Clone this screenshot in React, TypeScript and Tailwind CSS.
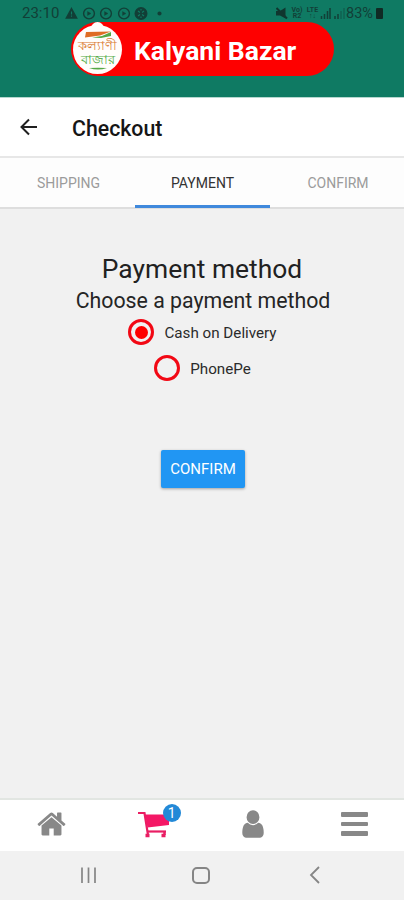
import React from "react";

const roboto = "font-['Roboto','Noto_Sans',sans-serif]";

function StatusBar() {
  return (
    <div className="flex h-[22px] items-start pt-[5px] pl-[22px] pr-[20px] text-[#123f37]">
      <span className="h-[17px] w-[38px] text-[15px] leading-[17px] whitespace-nowrap">23:10</span>
      <svg className="ml-[5px] mt-[2px] h-[13px] w-[100px]" viewBox="0 0 100 13" fill="none" stroke="currentColor" strokeWidth="1.4">
        <path d="M6.500 1.500L11.700 11H1.300Z" fill="currentColor" />
        <path d="M6.500 4.500v3M6.500 8.500v1.200" stroke="#0f7a63" strokeWidth="1.100" />
        {[24, 41, 59].map((x) => (
          <g key={x}>
            <circle cx={x} cy="6.500" r="5.400" />
            <path d={`M${x - 1.5} 4.500L${x + 2} 6.500L${x - 1.5} 8.500Z`} fill="currentColor" strokeWidth=".3" />
          </g>
        ))}
        <circle cx="76" cy="6.500" r="5.800" fill="currentColor" />
        <path d="M73 4l2 1.500M79 4l-2 1.500M73 9l2-1.500M79 9l-2-1.500M76 2v1.500M76 9.500v1.500" stroke="#0f7a63" strokeWidth="1.100" />
        <circle cx="94.500" cy="6.500" r="1.400" fill="currentColor" />
      </svg>
      <svg className="ml-auto mt-[2px] h-[13px] w-[14px]" viewBox="0 0 14 13" fill="#10362f">
        <path d="M0 4h4L9.500 .5v11L4 8.500H0z" />
        <path d="M.5 1l10.500 10.500" stroke="#10362f" strokeWidth="2" />
      </svg>
      <span className="mt-[2px] w-[14px] text-center text-[7px] font-bold leading-[6px]">Vo) R2</span>
      <span className="ml-[1px] mt-[2px] w-[15px] text-center text-[7px] font-bold leading-[6px]">LTE ↑↓</span>
      <svg className="mt-[2px] h-[13px] w-[26px]" viewBox="0 0 26 13" stroke="currentColor" strokeWidth="1.500" fill="none">
        <path d="M1.500 9v3M4.500 7v5M7.500 4v8M10 1v11M15 9v3M18 7v5" />
        <path d="M21 4v8M24 1v11" opacity=".4" />
      </svg>
      <span className="w-[30px] text-[14.500px] leading-[17px] whitespace-nowrap">83%</span>
      <span className="mt-[3px] mr-[1px] h-[11px] w-[7px] rounded-[1px] bg-[#102a24]" />
    </div>
  );
}

function BrandLogo() {
  return (
    <div className="relative flex h-[49px] w-[49px] flex-col items-center rounded-full bg-[#fffdfb] pt-[5px]">
      <span className="absolute -top-[3px] left-[18px] h-[8px] w-[13px] rounded-t-full bg-[#fffdfb]" />
      <svg className="relative h-[9px] w-[30px] shrink-0" viewBox="0 0 30 9">
        <path d="M3 2L28 1.500L17 5.500L2 7.500Z" fill="#df6d24" />
        <path d="M9 7.500L19 6L28 2V6L18 8Z" fill="#55a846" />
      </svg>
      <span className="text-[13px] leading-[14px] font-medium whitespace-nowrap text-[#d9782f]">কল্যাণী</span>
      <span className="text-[13px] leading-[13px] font-medium whitespace-nowrap text-[#4faa43]">বাজার</span>
      <svg className="mt-[1px] h-[3px] w-[18px] shrink-0" viewBox="0 0 18 3">
        <path d="M0 1Q9 .5 18 1Q9 4 0 1" fill="#55a846" />
      </svg>
    </div>
  );
}

function Header() {
  return (
    <header className="h-[98px] border-b border-[#b5d7cf] bg-[#0f7a63]">
      <StatusBar />
      <div className="ml-[71px] flex h-[54px] w-[263px] items-center rounded-full bg-[#fe0000] pl-[2px]">
        <BrandLogo />
        <h1 className="ml-[12px] mt-[4px] text-[26.500px] leading-[32px] font-bold whitespace-nowrap text-white">Kalyani Bazar</h1>
      </div>
    </header>
  );
}

function PaymentOption({ label, selected }: { label: string; selected?: boolean }) {
  return (
    <label className="flex h-[36px] items-center justify-center">
      <span className="flex h-[26px] w-[26px] items-center justify-center rounded-full border-[3px] border-[#f20814]">
        {selected && <span className="h-[13px] w-[13px] rounded-full bg-[#fe0000]" />}
      </span>
      <span className="ml-[10px] mt-[1px] text-[15.200px] leading-[20px] whitespace-nowrap text-[#2b2b2b]">{label}</span>
    </label>
  );
}

function BottomNav() {
  return (
    <nav className="grid h-[53px] grid-cols-4 border-t-[2px] border-[#e2e6e2] bg-white pl-[1px]">
      <div className="flex justify-center pt-[8px]">
        <svg className="h-[32px] w-[31px]" viewBox="0 0 1792 1792" preserveAspectRatio="none" fill="#888">
          <path d="M1472 992v480q0 26-19 45t-45 19h-384v-384h-256v384h-384q-26 0-45-19t-19-45v-480q0-1 .5-3t.5-3l575-474 575 474q1 2 1 6zm223-69l-62 74q-8 9-21 11h-3q-13 0-21-7l-692-577-692 577q-12 8-24 7-13-2-21-11l-62-74q-8-10-7-23.500t11-21.500l719-599q32-26 76-26t76 26l244 204v-195q0-14 9-23t23-9h192q14 0 23 9t9 23v408l219 182q10 8 11 21.500t-7 23.500z" />
        </svg>
      </div>
      <div className="flex justify-center pt-[4px]">
        <div className="relative ml-[15px] h-[36px] w-[44px]">
          <svg className="h-[36px] w-[44px]" viewBox="0 0 44 36" fill="none" stroke="#e91e63">
            <path d="M0 9H6.500L10 31" strokeWidth="2.200" />
            <path d="M7 10.500H28L31 16V21L9.500 23.500Z" fill="#f41866" stroke="none" />
            <path d="M9 27.500H28" strokeWidth="2.200" />
            <path d="M7.500 31.500h4M23.500 31.500h4" strokeWidth="3.600" />
            <path d="M26.500 27v4" strokeWidth="2.500" />
          </svg>
          <span className="absolute top-0 left-[25px] flex h-[18px] w-[18px] items-center justify-center rounded-full bg-[#2389d7] text-[14px] leading-none text-white">1</span>
        </div>
      </div>
      <div className="flex justify-center pt-[8px]">
        <svg className="h-[32px] w-[30px]" viewBox="0 0 1792 1792" preserveAspectRatio="none" fill="#888">
          <path d="M1536 1399q0 109-62.500 187t-150.500 78h-854q-88 0-150.500-78t-62.500-187q0-85 8.500-160.500t31.500-152 58.500-131 94-89 134.500-34.500q131 128 313 128t313-128q76 0 134.500 34.500t94 89 58.500 131 31.500 152 8.500 160.500zm-256-887q0 159-112.500 271.500t-271.500 112.500-271.500-112.500-112.500-271.500 112.500-271.500 271.500-112.500 271.500 112.500 112.500 271.500z" />
        </svg>
      </div>
      <div className="flex flex-col items-center gap-[5px] pt-[12px] pl-[2px]">
        <span className="h-[4.500px] w-[27px] rounded-[1px] bg-[#888]" />
        <span className="h-[4.500px] w-[27px] rounded-[1px] bg-[#888]" />
        <span className="h-[4.500px] w-[27px] rounded-[1px] bg-[#888]" />
      </div>
    </nav>
  );
}

export default function App() {
  return (
    <div className={`flex h-[900px] w-[404px] flex-col overflow-hidden bg-[#f1f1f1] ${roboto}`}>
      <Header />
      <div className="flex h-[60px] items-center border-b-[2px] border-[#e7e7e7] bg-white pl-[20px]">
        <svg className="h-[18px] w-[18px]" viewBox="0 0 18 18" fill="none" stroke="#202020" strokeWidth="2">
          <path d="M17 9H2M9 1.500L1.500 9L9 16.500" />
        </svg>
        <h2 className="ml-[34px] mt-[3px] text-[21.300px] leading-[28px] font-medium whitespace-nowrap text-[#161616]">Checkout</h2>
      </div>
      <div className="grid h-[51px] grid-cols-[135px_135px_134px] border-b-[2px] border-[#dedede] bg-[#fdfdfd] text-center text-[14px] leading-[51px] text-[#9b9b9b]">
        <span className="pl-[2px]">SHIPPING</span>
        <span className="h-[50px] border-b-[3px] border-[#4089dc] text-[#333]">PAYMENT</span>
        <span className="pl-[2px]">CONFIRM</span>
      </div>
      <main className="flex flex-1 flex-col items-center pt-[43px]">
        <h3 className="text-[26.400px] leading-[34px] whitespace-nowrap text-[#212121]">Payment method</h3>
        <p className="mt-[1px] ml-[2px] text-[21.300px] leading-[28px] whitespace-nowrap text-[#252525]">Choose a payment method</p>
        <div className="-mt-[1px] ml-[1px]">
          <PaymentOption label="Cash on Delivery" selected />
          <PaymentOption label="PhonePe" />
        </div>
        <button className="mt-[64px] ml-[2px] h-[38px] w-[84px] rounded-[2px] bg-[#2196f3] text-[15px] text-white shadow-[0_1px_3px_#0005]">CONFIRM</button>
      </main>
      <BottomNav />
      <div className="flex h-[49px] items-start bg-[#f1f1f1]">
        <svg className="mt-[12px] ml-[79px] h-[24px] w-[18px]" viewBox="0 0 18 24" stroke="#858585" strokeWidth="1.700">
          <path d="M3 4.500V20M9.500 4.500V20M16 4.500V20" />
        </svg>
        <span className="mt-[16px] ml-[95px] h-[17px] w-[18px] rounded-[5px] border-[2px] border-[#858585]" />
        <svg className="mt-[15px] ml-[99px] h-[18px] w-[12px]" viewBox="0 0 12 18" fill="none" stroke="#858585" strokeWidth="1.800">
          <path d="M10 1L2 9L10 17" />
        </svg>
      </div>
    </div>
  );
}
